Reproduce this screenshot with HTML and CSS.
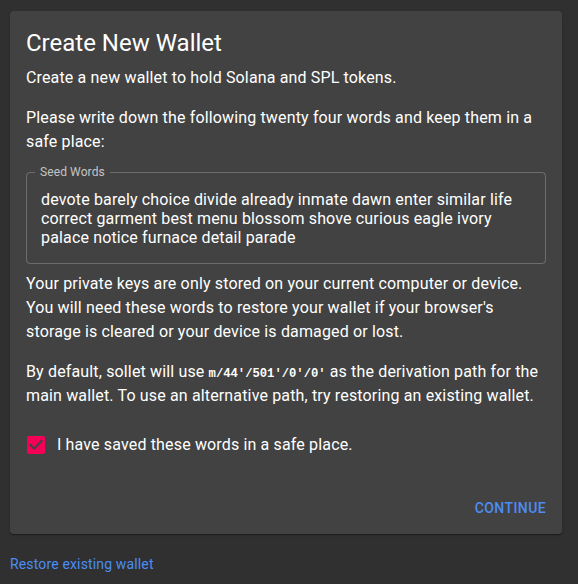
FILE: index.html
```html
<!DOCTYPE html>
<html lang="en">
<head>
<meta charset="utf-8">
<title>Create New Wallet</title>
<link rel="stylesheet" href="styles.css">
</head>
<body>
<div class="page">
  <div class="card">
    <div class="content">
      <h2 class="title">Create New Wallet</h2>
      <p class="text">Create a new wallet to hold Solana and SPL tokens.</p>
      <p class="text">Please write down the following twenty four words and keep them in a safe place:</p>
      <div class="field">
        <span class="field-label">Seed Words</span>
        <div class="seed">devote barely choice divide already inmate dawn enter similar life correct garment best menu blossom shove curious eagle ivory palace notice furnace detail parade</div>
      </div>
      <p class="text">Your private keys are only stored on your current computer or device. You will need these words to restore your wallet if your browser's storage is cleared or your device is damaged or lost.</p>
      <p class="text">By default, sollet will use <code class="path">m/44'/501'/0'/0'</code> as the derivation path for the main wallet. To use an alternative path, try restoring an existing wallet.</p>
      <label class="check">
        <span class="check-box">
          <svg viewBox="0 0 24 24" width="24" height="24"><path fill="#f50057" d="M19 3H5c-1.11 0-2 .9-2 2v14c0 1.1.89 2 2 2h14c1.110 0 2-.9 2-2V5c0-1.1-.89-2-2-2zm-9 14l-5-5 1.41-1.41L10 14.170l7.59-7.59L19 8l-9 9z"/></svg>
        </span>
        <span class="check-label">I have saved these words in a safe place.</span>
      </label>
    </div>
    <div class="actions">
      <button class="btn">Continue</button>
    </div>
  </div>
  <a class="restore" href="#">Restore existing wallet</a>
</div>
</body>
</html>
```

FILE: styles.css
```css
html, body {
  margin: 0;
  padding: 0;
  background: #303030;
}
body {
  font-family: Roboto, "Liberation Sans", sans-serif;
  color: #fff;
}
.page {
  padding: 11px 16px 0 10px;
}
.card {
  width: 552px;
  background: #424242;
  border-radius: 4px;
  box-shadow: 0 2px 1px -1px rgba(0,0,0,.2), 0 1px 1px 0 rgba(0,0,0,.14), 0 1px 3px 0 rgba(0,0,0,.12);
}
.content {
  padding: 16px 16px 16px;
}
.title {
  margin: 0 0 7px;
  font-size: 24px;
  font-weight: 400;
  line-height: 32px;
}
.text {
  margin: 0 0 16px;
  font-size: 16px;
  line-height: 24px;
  letter-spacing: 0.15px;
}
.field {
  position: relative;
  margin: 18px 0 8px;
  height: 92px;
  box-sizing: border-box;
  border: 1px solid rgba(255,255,255,0.23);
  border-radius: 4px;
  padding: 17px 14px 15px;
}
.field-label {
  position: absolute;
  left: 8px;
  top: -8px;
  padding: 0 5px;
  background: #424242;
  font-size: 12px;
  line-height: 14px;
  color: rgba(255,255,255,0.7);
  letter-spacing: 0.1px;
}
.seed {
  font-size: 16px;
  line-height: 19px;
  letter-spacing: 0.15px;
  color: #fff;
}
.path {
  font-family: "Liberation Mono", monospace;
  font-size: 12.2px;
  line-height: 1;
  font-weight: 700;
  letter-spacing: 0;
}
.check {
  display: flex;
  align-items: center;
  margin: 16px 0 0 -11px;
  height: 42px;
}
.check-box {
  display: flex;
  padding: 9px;
}
.check-label {
  font-size: 16px;
  line-height: 24px;
  letter-spacing: 0.15px;
}
.actions {
  display: flex;
  justify-content: flex-end;
  padding: 8px;
}
.btn {
  background: none;
  border: 0;
  padding: 6px 8px;
  font-family: Roboto, "Liberation Sans", sans-serif;
  font-size: 14px;
  font-weight: 500;
  line-height: 24px;
  letter-spacing: 0.4px;
  text-transform: uppercase;
  color: #4c8df5;
  cursor: pointer;
}
.restore {
  display: inline-block;
  margin-top: 20px;
  font-size: 14px;
  line-height: 20px;
  letter-spacing: 0.15px;
  color: #4c8df5;
  text-decoration: none;
}
```
